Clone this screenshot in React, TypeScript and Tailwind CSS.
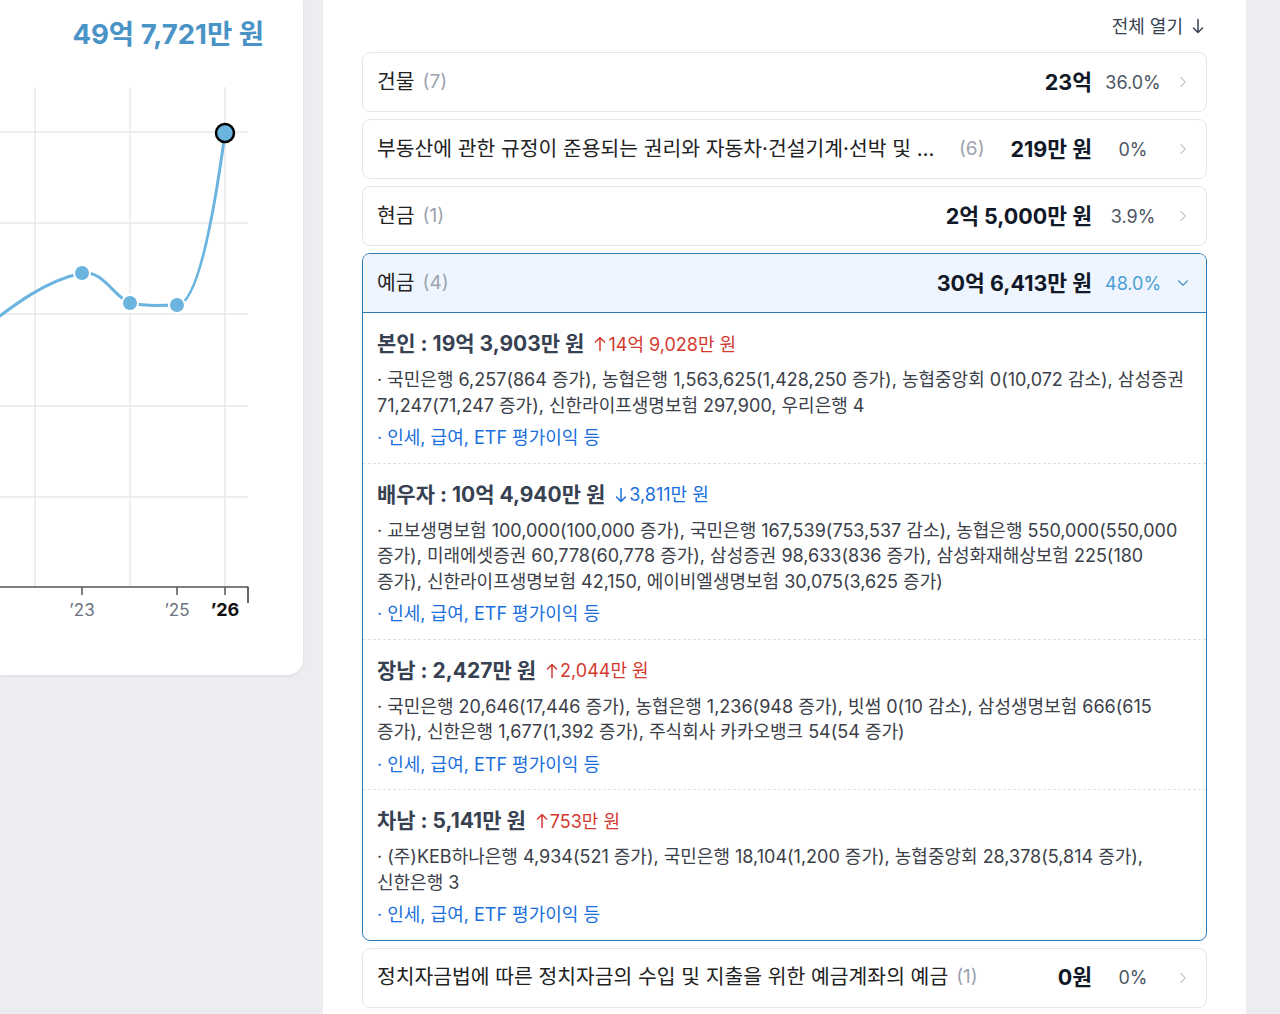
import { ChevronDown, ChevronRight } from "lucide-react";

const font = { fontFamily: 'Inter, "Noto Sans CJK KR", sans-serif' };

const categories = [
  { label: "건물", count: 7, amount: "23억", pct: "36.0%" },
  {
    label: "부동산에 관한 규정이 준용되는 권리와 자동차·건설기계·선박 및 항공기",
    count: 6,
    amount: "219만 원",
    pct: "0%",
  },
  { label: "현금", count: 1, amount: "2억 5,000만 원", pct: "3.9%" },
];

const deposits = [
  {
    who: "본인",
    amount: "19억 3,903만 원",
    up: true,
    change: "14억 9,028만 원",
    text: "· 국민은행 6,257(864 증가), 농협은행 1,563,625(1,428,250 증가), 농협중앙회 0(10,072 감소), 삼성증권 71,247(71,247 증가), 신한라이프생명보험 297,900, 우리은행 4",
  },
  {
    who: "배우자",
    amount: "10억 4,940만 원",
    up: false,
    change: "3,811만 원",
    text: "· 교보생명보험 100,000(100,000 증가), 국민은행 167,539(753,537 감소), 농협은행 550,000(550,000 증가), 미래에셋증권 60,778(60,778 증가), 삼성증권 98,633(836 증가), 삼성화재해상보험 225(180 증가), 신한라이프생명보험 42,150, 에이비엘생명보험 30,075(3,625 증가)",
  },
  {
    who: "장남",
    amount: "2,427만 원",
    up: true,
    change: "2,044만 원",
    text: "· 국민은행 20,646(17,446 증가), 농협은행 1,236(948 증가), 빗썸 0(10 감소), 삼성생명보험 666(615 증가), 신한은행 1,677(1,392 증가), 주식회사 카카오뱅크 54(54 증가)",
  },
  {
    who: "차남",
    amount: "5,141만 원",
    up: true,
    change: "753만 원",
    text: "· (주)KEB하나은행 4,934(521 증가), 국민은행 18,104(1,200 증가), 농협중앙회 28,378(5,814 증가), 신한은행 3",
  },
];

function Arrow({ down }: { down?: boolean }) {
  return (
    <svg width="12" height="16" viewBox="0 0 12 16" className="shrink-0" fill="none" stroke="currentColor" strokeWidth="1.5" strokeLinecap="round" strokeLinejoin="round">
      {down ? <path d="M6 1.5V14.5M1.5 10L6 14.5L10.5 10" /> : <path d="M6 14.5V1.5M1.5 6L6 1.5L10.5 6" />}
    </svg>
  );
}

function Chart() {
  const grid = "#e6e8ec";
  return (
    <svg width="303" height="640" viewBox="0 0 303 640" className="block">
      {[133, 224, 315, 407, 498].map((y) => (
        <line key={y} x1="0" x2="248" y1={y} y2={y} stroke={grid} strokeWidth="1.5" />
      ))}
      {[35, 130, 225].map((x) => (
        <line key={x} x1={x} x2={x} y1="88" y2="588" stroke={grid} strokeWidth="1.5" />
      ))}
      <line x1="0" x2="248.5" y1="588" y2="588" stroke="#555" strokeWidth="1.5" />
      <line x1="248" x2="248" y1="588" y2="604" stroke="#333" strokeWidth="1.5" />
      {[82, 177, 225].map((x) => (
        <line key={x} x1={x} x2={x} y1="588" y2="596" stroke="#555" strokeWidth="1.5" />
      ))}
      <text x="82" y="617" textAnchor="middle" fontSize="17" fill="#6b7280" style={font}>
        ’23
      </text>
      <text x="177" y="617" textAnchor="middle" fontSize="17" fill="#6b7280" style={font}>
        ’25
      </text>
      <text x="225" y="617" textAnchor="middle" fontSize="18" fontWeight="700" fill="#111" style={font}>
        ’26
      </text>
      <path
        d="M -20 332 C 15 305, 45 282, 82 274 C 102 270, 116 300, 130 304 C 148 308, 162 306, 177 306 C 196 306, 212 230, 225 134"
        fill="none"
        stroke="#6cb4e0"
        strokeWidth="3"
        strokeLinecap="round"
      />
      {[
        [82, 274],
        [130, 304],
        [177, 306],
      ].map(([x, y]) => (
        <circle key={x} cx={x} cy={y} r="8" fill="#6cb4e0" stroke="#fff" strokeWidth="2" />
      ))}
      <circle cx="225" cy="134" r="9" fill="#6cb4e0" stroke="#000" strokeWidth="2.5" />
    </svg>
  );
}

function Row({ label, count, amount, pct }: { label: string; count: number; amount: string; pct: string }) {
  return (
    <div className="flex h-[60px] items-center rounded-lg border border-[#e3e5e9] bg-white px-[14px]">
      <div className="flex min-w-0 flex-1 items-center">
        <span className="truncate text-[20.4px] text-[#222]">{label}</span>
        <span className="ml-2 shrink-0 text-[19px] text-[#9ca3af]">({count})</span>
      </div>
      <span className="ml-[26px] shrink-0 text-[21.5px] font-bold text-[#111827]">{amount}</span>
      <span className="ml-[13px] w-[56px] shrink-0 text-center text-[18px] text-[#4b5563]">{pct}</span>
      <ChevronRight className="ml-[13px] h-[18px] w-[18px] shrink-0 text-[#c4c8ce]" strokeWidth={1.5} />
    </div>
  );
}

export default function App() {
  return (
    <div className="flex h-[1014px] overflow-hidden bg-[#ebedf1]" style={font}>
      <div className="w-[303px] shrink-0">
        <div className="h-[675px] overflow-hidden rounded-br-2xl bg-white shadow-[0_1px_3px_rgba(0,0,0,0.08)]">
          <div className="pr-[39px] pt-[14px] text-right text-[27.5px] font-bold text-[#4a93c6]">
            49억 7,721만 원
          </div>
          <div className="-mt-[56px]">
            <Chart />
          </div>
        </div>
      </div>
      <div className="ml-[20px] w-[923px] shrink-0 bg-white px-[39px] pt-[12px]">
        <div className="mb-[12px] flex h-[28px] items-center justify-end gap-[9px] pr-[3px] text-[18px] text-[#374151]">
          전체 열기
          <Arrow down />
        </div>
        <div className="flex flex-col gap-[7px]">
          {categories.map((c) => (
            <Row key={c.label} {...c} />
          ))}
          <div className="overflow-hidden rounded-lg border border-[#2b7bb9] bg-white">
            <div className="flex h-[59px] items-center border-b border-[#2b7bb9] bg-[#eef5fe] px-[14px]">
              <div className="flex min-w-0 flex-1 items-center">
                <span className="text-[20.4px] text-[#222]">예금</span>
                <span className="ml-2 text-[19px] text-[#9ca3af]">(4)</span>
              </div>
              <span className="shrink-0 text-[21.5px] font-bold text-[#111827]">30억 6,413만 원</span>
              <span className="ml-[13px] w-[56px] shrink-0 text-center text-[18px] text-[#4a9fd5]">48.0%</span>
              <ChevronDown className="ml-[13px] h-[18px] w-[18px] shrink-0 text-[#4a8fc4]" strokeWidth={1.5} />
            </div>
            {deposits.map((d, i) => (
              <div
                key={d.who}
                className={`px-[14px] pb-[12px] pt-[17px] ${i > 0 ? "border-t border-dashed border-[#dfe2e7]" : ""}`}
              >
                <div className="flex h-[28px] items-center">
                  <span className="text-[21px] font-bold text-[#374151]">
                    {d.who} : {d.amount}
                  </span>
                  <span
                    className={`ml-[10px] flex items-center gap-[2px] text-[18px] ${d.up ? "text-[#d33a2f]" : "text-[#1a6fdc]"}`}
                  >
                    <Arrow down={!d.up} />
                    {d.change}
                  </span>
                </div>
                <p className="mt-[9px] break-keep text-[18px] leading-[25.5px] text-[#3b4049]">{d.text}</p>
                <p className="mt-[7px] text-[18px] leading-[25.5px] text-[#1a6fdc]">· 인세, 급여, ETF 평가이익 등</p>
              </div>
            ))}
          </div>
          <Row label="정치자금법에 따른 정치자금의 수입 및 지출을 위한 예금계좌의 예금" count={1} amount="0원" pct="0%" />
        </div>
      </div>
    </div>
  );
}
